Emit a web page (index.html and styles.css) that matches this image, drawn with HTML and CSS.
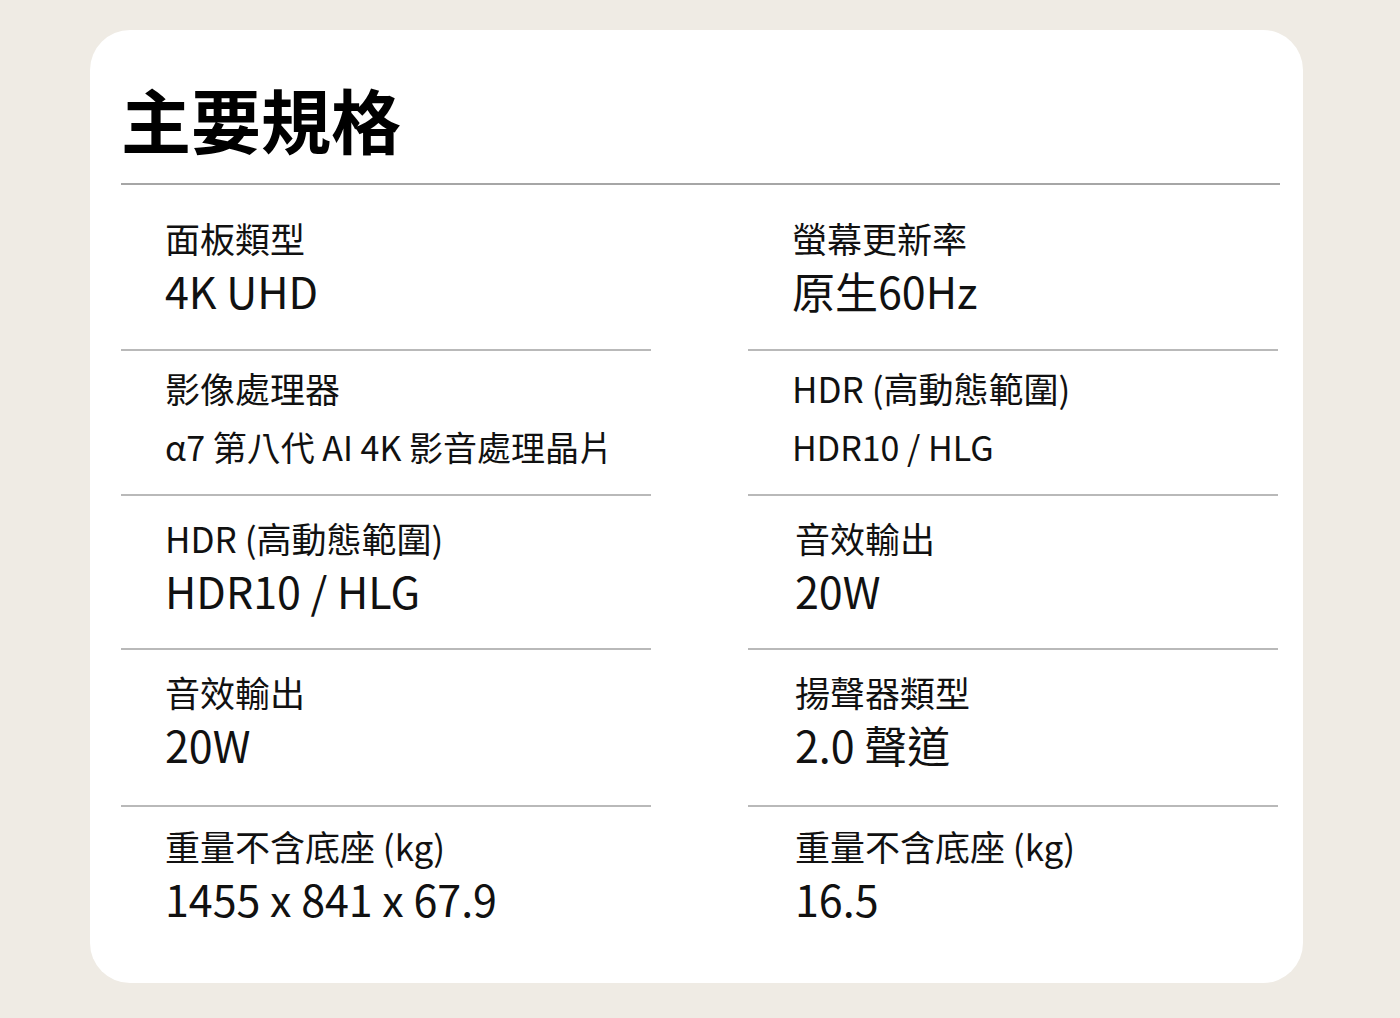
FILE: index.html
```html
<!DOCTYPE html>
<html lang="zh-Hant">
<head>
<meta charset="utf-8">
<title>主要規格</title>
<link rel="stylesheet" href="styles.css">
</head>
<body>
<main class="card">
  <h1 class="title">主要規格</h1>
  <div class="specs">
    <div class="cell r1"><div class="label">面板類型</div><div class="value">4K UHD</div></div>
    <div class="cell r1"><div class="label">螢幕更新率</div><div class="value">原生60Hz</div></div>

    <div class="cell r2"><div class="label">影像處理器</div><div class="value small">α7 第八代 AI 4K 影音處理晶片</div></div>
    <div class="cell r2"><div class="label">HDR (高動態範圍)</div><div class="value small">HDR10 / HLG</div></div>

    <div class="cell r3"><div class="label">HDR (高動態範圍)</div><div class="value">HDR10 / HLG</div></div>
    <div class="cell r3 shift"><div class="label">音效輸出</div><div class="value">20W</div></div>

    <div class="cell r4"><div class="label">音效輸出</div><div class="value">20W</div></div>
    <div class="cell r4 shift"><div class="label">揚聲器類型</div><div class="value">2.0 聲道</div></div>

    <div class="cell r5 last"><div class="label">重量不含底座 (kg)</div><div class="value">1455 x 841 x 67.9</div></div>
    <div class="cell r5 last shift"><div class="label">重量不含底座 (kg)</div><div class="value">16.5</div></div>
  </div>
</main>
</body>
</html>
```

FILE: styles.css
```css
html, body {
  margin: 0;
  padding: 0;
  background: #efebe4;
}

body {
  width: 1400px;
  height: 1018px;
  padding-top: 30px;
  box-sizing: border-box;
  font-family: "Noto Sans CJK TC", "Noto Sans", sans-serif;
  color: #111;
}

.card {
  margin-left: 90px;
  width: 1213px;
  height: 953px;
  box-sizing: border-box;
  background: #fff;
  border-radius: 40px;
  padding: 54px 23px 0 31px;
}

.title {
  margin: 0;
  font-size: 70px;
  line-height: 1;
  font-weight: 700;
  color: #000;
  padding-bottom: 29px;
  border-bottom: 2px solid #a6a6a6;
}

.specs {
  display: grid;
  grid-template-columns: 530px 530px;
  column-gap: 97px;
  grid-template-rows: 166px 145px 154px 157px auto;
}

.cell {
  box-sizing: border-box;
  padding-left: 44px;
  border-bottom: 2px solid #b9b9b9;
}

.cell.shift {
  padding-left: 47px;
}

.cell.last {
  border-bottom: none;
}

.r1 { padding-top: 35px; }
.r2 { padding-top: 19px; }
.r3 { padding-top: 24px; }
.r4 { padding-top: 24px; }
.r5 { padding-top: 21px; }

.label {
  font-size: 35px;
  line-height: 1;
  font-weight: 400;
}

.value {
  font-size: 43px;
  line-height: 1;
  margin-top: 14px;
  font-weight: 400;
}

.value.small {
  font-size: 34px;
  margin-top: 25px;
}
```
